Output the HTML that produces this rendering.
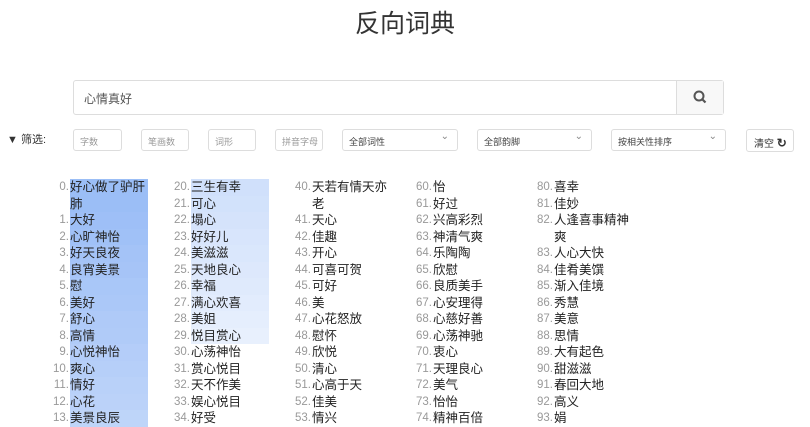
<!DOCTYPE html>
<html><head><meta charset="utf-8">
<style>
*{box-sizing:border-box;margin:0;padding:0}
body{width:810px;height:427px;overflow:hidden;background:#fff;font-family:"Liberation Sans","Noto Sans CJK SC",sans-serif;color:#222;position:relative}
h1{position:absolute;top:4px;left:0;width:810px;text-align:center;font-size:25px;font-weight:normal;color:#333}
.search{position:absolute;left:73px;top:80px;width:651px;height:35px;border:1px solid #ddd;border-radius:3px}
.search .t{position:absolute;left:10px;top:9px;font-size:12px;color:#555}
.search .b{position:absolute;right:0;top:0;width:47px;height:33px;background:#f8f8f8;border-left:1px solid #ddd}
.f{position:absolute;top:129px;height:22px;border:1px solid #ddd;border-radius:3px;font-size:9px;color:#999;padding:5px 6px;white-space:nowrap;overflow:hidden}
.f.s{color:#444}
.f.s:after{content:"⌄";position:absolute;right:8px;top:1px;font-size:10px;color:#888}
.lbl{position:absolute;left:7px;top:131px;font-size:11px;color:#333}
ol{position:absolute;top:179px;list-style:none;font-size:12.5px;line-height:16.5px}
li{display:flex}
li .n{width:30px;text-align:right;color:#999;font-size:11.5px;padding-right:1px}
li .w{width:78px}
</style></head><body>
<h1>反向词典</h1>
<div class="search"><span class="t">心情真好</span><div class="b">
<svg width="47" height="33" viewBox="0 0 47 33"><circle cx="22" cy="15" r="4.5" fill="none" stroke="#555" stroke-width="2"/><line x1="25.5" y1="18.5" x2="28.5" y2="21.5" stroke="#555" stroke-width="2.2"/></svg></div></div>
<div class="lbl">▼ 筛选:</div>
<div class="f" style="left:73px;width:49px">字数</div>
<div class="f" style="left:141px;width:48px">笔画数</div>
<div class="f" style="left:208px;width:48px">词形</div>
<div class="f" style="left:275px;width:48px">拼音字母</div>
<div class="f s" style="left:342px;width:116px">全部词性</div>
<div class="f s" style="left:477px;width:115px">全部韵脚</div>
<div class="f s" style="left:611px;width:115px">按相关性排序</div>
<div class="f" style="left:746px;width:48px;height:23px;color:#333;font-size:10px;padding:5px 7px">清空 <b style="font-size:12px">↻</b></div>

<ol style="left:40px">
<li><span class="n">0.</span><span class="w" style="background:rgba(80,140,240,.57)">好心做了驴肝肺</span></li>
<li><span class="n">1.</span><span class="w" style="background:rgba(80,140,240,.555)">大好</span></li>
<li><span class="n">2.</span><span class="w" style="background:rgba(80,140,240,.54)">心旷神怡</span></li>
<li><span class="n">3.</span><span class="w" style="background:rgba(80,140,240,.52)">好天良夜</span></li>
<li><span class="n">4.</span><span class="w" style="background:rgba(80,140,240,.51)">良宵美景</span></li>
<li><span class="n">5.</span><span class="w" style="background:rgba(80,140,240,.49)">慰</span></li>
<li><span class="n">6.</span><span class="w" style="background:rgba(80,140,240,.48)">美好</span></li>
<li><span class="n">7.</span><span class="w" style="background:rgba(80,140,240,.46)">舒心</span></li>
<li><span class="n">8.</span><span class="w" style="background:rgba(80,140,240,.45)">高情</span></li>
<li><span class="n">9.</span><span class="w" style="background:rgba(80,140,240,.43)">心悦神怡</span></li>
<li><span class="n">10.</span><span class="w" style="background:rgba(80,140,240,.42)">爽心</span></li>
<li><span class="n">11.</span><span class="w" style="background:rgba(80,140,240,.40)">情好</span></li>
<li><span class="n">12.</span><span class="w" style="background:rgba(80,140,240,.39)">心花</span></li>
<li><span class="n">13.</span><span class="w" style="background:rgba(80,140,240,.37)">美景良辰</span></li>
</ol>
<ol style="left:161px">
<li><span class="n">20.</span><span class="w" style="background:rgba(80,140,240,.27)">三生有幸</span></li>
<li><span class="n">21.</span><span class="w" style="background:rgba(80,140,240,.255)">可心</span></li>
<li><span class="n">22.</span><span class="w" style="background:rgba(80,140,240,.24)">塌心</span></li>
<li><span class="n">23.</span><span class="w" style="background:rgba(80,140,240,.225)">好好儿</span></li>
<li><span class="n">24.</span><span class="w" style="background:rgba(80,140,240,.21)">美滋滋</span></li>
<li><span class="n">25.</span><span class="w" style="background:rgba(80,140,240,.195)">天地良心</span></li>
<li><span class="n">26.</span><span class="w" style="background:rgba(80,140,240,.18)">幸福</span></li>
<li><span class="n">27.</span><span class="w" style="background:rgba(80,140,240,.165)">满心欢喜</span></li>
<li><span class="n">28.</span><span class="w" style="background:rgba(80,140,240,.15)">美姐</span></li>
<li><span class="n">29.</span><span class="w" style="background:rgba(80,140,240,.135)">悦目赏心</span></li>
<li><span class="n">30.</span><span class="w">心荡神怡</span></li>
<li><span class="n">31.</span><span class="w">赏心悦目</span></li>
<li><span class="n">32.</span><span class="w">天不作美</span></li>
<li><span class="n">33.</span><span class="w">娱心悦目</span></li>
<li><span class="n">34.</span><span class="w">好受</span></li>
</ol>
<ol style="left:282px">
<li><span class="n">40.</span><span class="w">天若有情天亦老</span></li>
<li><span class="n">41.</span><span class="w">天心</span></li>
<li><span class="n">42.</span><span class="w">佳趣</span></li>
<li><span class="n">43.</span><span class="w">开心</span></li>
<li><span class="n">44.</span><span class="w">可喜可贺</span></li>
<li><span class="n">45.</span><span class="w">可好</span></li>
<li><span class="n">46.</span><span class="w">美</span></li>
<li><span class="n">47.</span><span class="w">心花怒放</span></li>
<li><span class="n">48.</span><span class="w">慰怀</span></li>
<li><span class="n">49.</span><span class="w">欣悦</span></li>
<li><span class="n">50.</span><span class="w">清心</span></li>
<li><span class="n">51.</span><span class="w">心高于天</span></li>
<li><span class="n">52.</span><span class="w">佳美</span></li>
<li><span class="n">53.</span><span class="w">情兴</span></li>
</ol>
<ol style="left:403px">
<li><span class="n">60.</span><span class="w">怡</span></li>
<li><span class="n">61.</span><span class="w">好过</span></li>
<li><span class="n">62.</span><span class="w">兴高彩烈</span></li>
<li><span class="n">63.</span><span class="w">神清气爽</span></li>
<li><span class="n">64.</span><span class="w">乐陶陶</span></li>
<li><span class="n">65.</span><span class="w">欣慰</span></li>
<li><span class="n">66.</span><span class="w">良质美手</span></li>
<li><span class="n">67.</span><span class="w">心安理得</span></li>
<li><span class="n">68.</span><span class="w">心慈好善</span></li>
<li><span class="n">69.</span><span class="w">心荡神驰</span></li>
<li><span class="n">70.</span><span class="w">衷心</span></li>
<li><span class="n">71.</span><span class="w">天理良心</span></li>
<li><span class="n">72.</span><span class="w">美气</span></li>
<li><span class="n">73.</span><span class="w">怡怡</span></li>
<li><span class="n">74.</span><span class="w">精神百倍</span></li>
</ol>
<ol style="left:524px">
<li><span class="n">80.</span><span class="w">喜幸</span></li>
<li><span class="n">81.</span><span class="w">佳妙</span></li>
<li><span class="n">82.</span><span class="w">人逢喜事精神爽</span></li>
<li><span class="n">83.</span><span class="w">人心大快</span></li>
<li><span class="n">84.</span><span class="w">佳肴美馔</span></li>
<li><span class="n">85.</span><span class="w">渐入佳境</span></li>
<li><span class="n">86.</span><span class="w">秀慧</span></li>
<li><span class="n">87.</span><span class="w">美意</span></li>
<li><span class="n">88.</span><span class="w">思情</span></li>
<li><span class="n">89.</span><span class="w">大有起色</span></li>
<li><span class="n">90.</span><span class="w">甜滋滋</span></li>
<li><span class="n">91.</span><span class="w">春回大地</span></li>
<li><span class="n">92.</span><span class="w">高义</span></li>
<li><span class="n">93.</span><span class="w">娟</span></li>
</ol>
</body></html>
